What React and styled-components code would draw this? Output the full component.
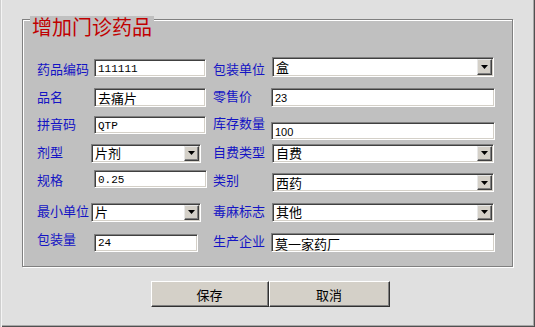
import React from 'react';
import styled, { createGlobalStyle } from 'styled-components';

const Global = createGlobalStyle`
  html, body { margin: 0; padding: 0; background: #e0e0e0; }
  body { font-family: "Noto Sans CJK SC", "Liberation Sans", sans-serif; }
  * { box-sizing: border-box; }
`;

const Window = styled.div`
  width: 535px;
  height: 327px;
  background: #e0e0e0;
  padding: 19px 22px 0 22px;
  display: flex;
  flex-direction: column;
  box-shadow: inset 1px 0 0 #cfcfcf, inset 2px 0 0 #f4f4f4, inset 0 -1px 0 #505050, inset -1px 0 0 #505050, inset 0 -2px 0 #a8a8a8, inset -2px 0 0 #a8a8a8;
`;

const Panel = styled.div`
  position: relative;
  height: 248px;
  background: #c0c0c0;
  border: 1px solid #808080;
  box-shadow: inset 1px 1px 0 #ffffff, 1px 1px 0 #ffffff;
  padding: 34px 0 0 14px;
`;

const Title = styled.div`
  position: absolute;
  left: 7px;
  top: -4px;
  padding: 0 2px;
  background: #c0c0c0;
  color: #c00000;
  font-size: 20px;
  line-height: 22px;
  white-space: nowrap;
`;

const Grid = styled.div`
  display: grid;
  grid-template-columns: 54px 122px 57px 226px;
  grid-template-rows: 28px 28px 28px 28px 30px 30px 29px;
  align-items: center;
`;

const Label = styled.div`
  color: #1414c4;
  font-size: 13px;
  line-height: 16px;
  white-space: nowrap;
  margin-top: ${p => p.$mt || 0}px;
`;

const Sunken = styled.div`
  background: #ffffff;
  border: 1px solid;
  border-color: #808080 #ffffff #ffffff #808080;
  box-shadow: inset 1px 1px 0 #404040, inset -1px -1px 0 #d4d0c8;
  display: flex;
  align-items: center;
  color: #000;
  white-space: nowrap;
  overflow: hidden;
`;

const TextBox = styled(Sunken)`
  height: ${p => p.$h || 18}px;
  width: ${p => p.$w}px;
  margin-left: ${p => p.$ml || 0}px;
  margin-top: ${p => p.$mt || 0}px;
  padding-left: 3px;
  font-family: ${p => p.$mono ? '"Liberation Mono", "Noto Sans CJK SC", monospace' : p.$latin ? '"Liberation Sans", "Noto Sans CJK SC", sans-serif' : '"Noto Sans CJK SC", sans-serif'};
  font-size: ${p => (p.$mono || p.$latin) ? 11 : 13}px;
  padding-top: 1px;
`;

const SelectBox = styled(Sunken)`
  height: ${p => p.$h || 19}px;
  width: ${p => p.$w}px;
  margin-left: ${p => p.$ml || 0}px;
  margin-top: ${p => p.$mt || 0}px;
  padding: 0 1px 0 3px;
  font-size: 13px;
  justify-content: space-between;
`;

const SelectText = styled.span`
  line-height: 16px;
`;

const DropButton = styled.div`
  width: 15px;
  height: calc(100% - 2px);
  background: #d4d0c8;
  border: 1px solid;
  border-color: #e8e8e8 #404040 #404040 #e8e8e8;
  box-shadow: inset -1px -1px 0 #808080;
  display: flex;
  align-items: center;
  justify-content: center;
`;

const ButtonBar = styled.div`
  display: flex;
  justify-content: center;
  margin-top: 14px;
  padding-left: 5px;
`;

const Button = styled.div`
  width: ${p => p.$w}px;
  height: 26px;
  background: #d4d0c8;
  border: 1px solid;
  border-color: #ffffff #303030 #303030 #ffffff;
  box-shadow: inset -1px -1px 0 #808080;
  display: flex;
  align-items: center;
  justify-content: center;
  font-size: 13px;
  color: #000;
`;

const Arrow = () => (
  <svg width="7" height="4" viewBox="0 0 7 4">
    <polygon points="0,0 7,0 3.5,4" fill="#000" />
  </svg>
);

const Select = ({ value, ...rest }) => (
  <SelectBox {...rest}>
    <SelectText>{value}</SelectText>
    <DropButton><Arrow /></DropButton>
  </SelectBox>
);

export default function App() {
  return (
    <>
      <Global />
      <Window>
        <Panel>
          <Title>增加门诊药品</Title>
          <Grid>
            <Label $mt={1}>药品编码</Label>
            <TextBox $w={112} $ml={3} $mono>111111</TextBox>
            <Label $mt={2}>包装单位</Label>
            <Select value="盒" $w={222} $ml={2} $h={20} $mt={-2} />

            <Label $mt={2}>品名</Label>
            <TextBox $w={112} $ml={3} $h={19} $mt={2}>去痛片</TextBox>
            <Label>零售价</Label>
            <TextBox $w={224} $ml={1} $h={19} $mt={2} $latin>23</TextBox>

            <Label $mt={0}>拼音码</Label>
            <TextBox $w={112} $ml={3} $mt={2} $mono>QTP</TextBox>
            <Label $mt={-2}>库存数量</Label>
            <TextBox $w={224} $ml={1} $mt={14} $latin>100</TextBox>

            <Label>剂型</Label>
            <Select value="片剂" $w={110} $ml={0} $mt={2} />
            <Label>自费类型</Label>
            <Select value="自费" $w={222} $ml={2} $mt={2} />

            <Label $mt={-2}>规格</Label>
            <TextBox $w={113} $ml={3} $mt={-4} $mono>0.25</TextBox>
            <Label $mt={-2}>类别</Label>
            <Select value="西药" $w={222} $ml={2} $mt={3} />

            <Label>最小单位</Label>
            <Select value="片" $w={110} $ml={0} $mt={2} />
            <Label>毒麻标志</Label>
            <Select value="其他" $w={222} $ml={2} $mt={2} />

            <Label $mt={-3}>包装量</Label>
            <TextBox $w={104} $ml={3} $mt={4} $mono>24</TextBox>
            <Label $mt={1}>生产企业</Label>
            <TextBox $w={224} $ml={1} $h={19} $mt={4}>莫一家药厂</TextBox>
          </Grid>
        </Panel>
        <ButtonBar>
          <Button $w={118}>保存</Button>
          <Button $w={121}>取消</Button>
        </ButtonBar>
      </Window>
    </>
  );
}
